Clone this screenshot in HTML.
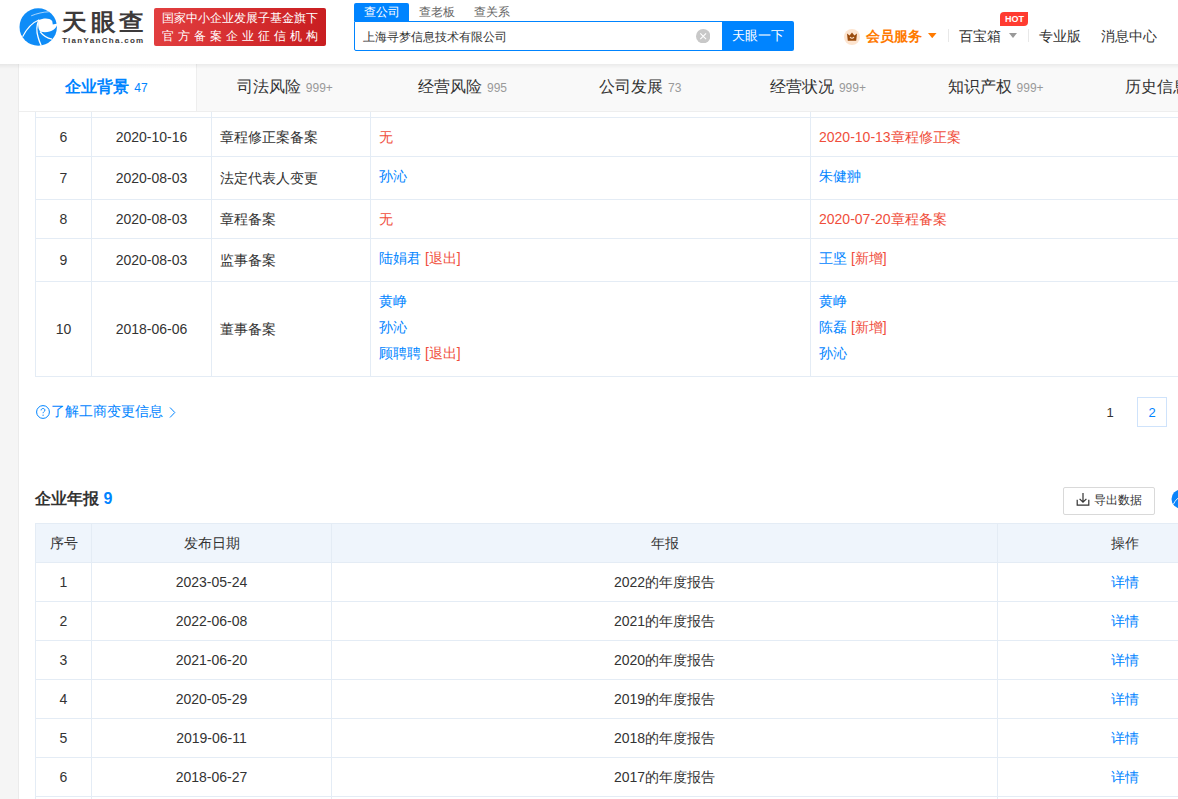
<!DOCTYPE html>
<html><head><meta charset="utf-8">
<style>
*{box-sizing:border-box;margin:0;padding:0}
html,body{width:1178px;height:799px;overflow:hidden;background:#f5f5f5;font-family:"Liberation Sans",sans-serif;color:#333;font-size:14px}
.abs{position:absolute}
#hdr{position:absolute;left:0;top:0;width:1178px;height:64px;background:#fff;z-index:5}
#shadow{position:absolute;left:0;top:64px;width:1178px;height:5px;background:linear-gradient(rgba(0,0,0,0.06),rgba(0,0,0,0));z-index:6}
#panel{position:absolute;left:18px;border-left:1px solid #ebebeb;top:64px;width:1247px;height:800px;background:#fff}
#tabs{position:absolute;left:19px;top:64px;width:1247px;height:48px;background:#f9f9f9;border-bottom:1px solid #eee;display:flex;z-index:4}
.tab{flex:0 0 177.7px;text-align:center;font-size:16px;line-height:46px;color:#333;white-space:nowrap;padding-right:2px}
.tab .n{font-size:12px;color:#999;margin-left:5px}
.tab.on{flex:0 0 178px;background:#fff;color:#0084ff;font-weight:bold;border-right:1px solid #eee;line-height:45px}
.tab.on .n{color:#0084ff;font-weight:normal}
table{border-collapse:collapse;table-layout:fixed;position:absolute}
td,th{border:1px solid #e4ecf5;font-size:14px;font-weight:normal;color:#333;padding:8px 8px;line-height:22px;vertical-align:middle}
.c{text-align:center}
.b{color:#0084ff}
.r{color:#f04e3c}
.lk{line-height:22px;margin-bottom:4px}
th{background:#eff5fc}
</style></head><body>
<div id="hdr">
  <!-- logo -->
  <svg class="abs" style="left:17px;top:6px" width="42" height="42" viewBox="0 0 42 42">
    <circle cx="21.2" cy="21" r="18.7" fill="#0f8cf7"/>
    <path d="M21.6 14.2 C26 12.3 32 11.6 35.2 15 L35.8 18.6 L40.5 17.6 C39.5 23.5 33 27.5 23.7 25.8 C21.2 24 20.6 18 21.6 14.2 Z" fill="#fff"/>
    <path d="M5.6 30.8 C10 22 15.5 16.5 22.3 13.8" stroke="#fff" stroke-width="1.1" fill="none"/>
    <path d="M21.8 14 C19.6 19 19.4 26 21.2 31.5 C22 34.5 23 37 24.3 39.8" stroke="#fff" stroke-width="1.3" fill="none"/>
    <path d="M23 25.6 C26 29.5 30 32 35 33.2" stroke="#fff" stroke-width="1.3" fill="none"/>
    <path d="M14.2 9.8 C20 7.5 26 6 31.8 5.8" stroke="#fff" stroke-width="0.8" fill="none" opacity="0.8"/>
  </svg>
  <div class="abs" style="left:62px;top:8px;font-size:25px;font-weight:bold;color:#3d3a3a;letter-spacing:3.5px;line-height:30px;transform:scaleY(0.93);transform-origin:0 0">天眼查</div>
  <div class="abs" style="left:62px;top:35px;font-size:8px;font-weight:bold;color:#3d3a3a;letter-spacing:1.3px;line-height:11px">TianYanCha.com</div>
  <div class="abs" style="left:154px;top:8px;width:172px;height:38px;background:linear-gradient(100deg,#e23f40,#c81d20);border-radius:2px;color:#fff">
    <div class="abs" style="left:8px;top:3px;font-size:12px;line-height:15px;white-space:nowrap">国家中小企业发展子基金旗下</div>
    <div class="abs" style="left:8px;top:21px;font-size:12px;line-height:15px;white-space:nowrap;letter-spacing:4px">官方备案企业征信机构</div>
  </div>
  <!-- search -->
  <div class="abs" style="left:354px;top:3px;width:55px;height:18px;background:#0084ff;border-radius:2px 2px 0 0;color:#fff;font-size:12px;line-height:18px;text-align:center">查公司</div>
  <div class="abs" style="left:409px;top:3px;width:55px;height:18px;color:#666;font-size:12px;line-height:18px;text-align:center">查老板</div>
  <div class="abs" style="left:464px;top:3px;width:55px;height:18px;color:#666;font-size:12px;line-height:18px;text-align:center">查关系</div>
  <div class="abs" style="left:354px;top:21px;width:369px;height:30px;border:1px solid #0084ff;border-radius:0 0 0 2px;background:#fff">
    <div class="abs" style="left:8px;top:0.5px;font-size:12.2px;line-height:28px;color:#333">上海寻梦信息技术有限公司</div>
    <svg class="abs" style="left:340.7px;top:6.5px" width="14.4" height="14.4" viewBox="0 0 14.4 14.4"><circle cx="7.2" cy="7.2" r="7.2" fill="#c8c8c8"/><path d="M4.3 4.3L10.1 10.1M10.1 4.3L4.3 10.1" stroke="#fff" stroke-width="1.1"/></svg>
  </div>
  <div class="abs" style="left:722px;top:21px;width:72px;height:30px;background:#0084ff;border-radius:0 2px 2px 0;color:#fff;font-size:12.5px;line-height:31px;text-align:center">天眼一下</div>
  <!-- right nav -->
  <svg class="abs" style="left:844px;top:29px" width="16" height="16" viewBox="0 0 16 16"><circle cx="8" cy="8" r="8" fill="#fde4cf"/><path d="M3 4.6 L5.6 6.4 L8 3.6 L10.4 6.4 L13 4.6 L12.2 11.8 H3.8 Z" fill="#9a4b0c"/><path d="M6 8 Q8 10.6 10 8" stroke="#fde4cf" stroke-width="1.1" fill="none"/></svg>
  <div class="abs" style="left:866px;top:26px;font-size:14px;line-height:20px;color:#ff7a00;font-weight:bold">会员服务</div>
  <svg class="abs" style="left:928.3px;top:33px" width="8.5" height="5.2" viewBox="0 0 8.5 5.2"><path d="M0 0H8.5L4.25 5.2Z" fill="#ff7a00"/></svg>
  <div class="abs" style="left:948px;top:29px;width:1px;height:13px;background:#e8e8e8"></div>
  <div class="abs" style="left:959px;top:26px;font-size:14px;line-height:20px;color:#333">百宝箱</div>
  <svg class="abs" style="left:1008.5px;top:33px" width="8" height="5" viewBox="0 0 8 5"><path d="M0 0H8L4 5Z" fill="#999"/></svg>
  <div class="abs" style="left:1000px;top:12px;width:28px;height:13.7px;background:#ff3b30;border-radius:4px 0 4px 0;color:#fff;font-size:9px;line-height:14px;text-align:center;font-weight:bold;padding-left:1px">HOT</div>
  <div class="abs" style="left:1028px;top:29px;width:1px;height:13px;background:#e8e8e8"></div>
  <div class="abs" style="left:1039px;top:26px;font-size:14px;line-height:20px;color:#333">专业版</div>
  <div class="abs" style="left:1101px;top:26px;font-size:14px;line-height:20px;color:#333">消息中心</div>
</div>
<div id="shadow"></div>
<div id="panel"></div>

<!-- change table -->
<table style="left:35px;top:78px;width:1216px">
  <colgroup><col style="width:56px"><col style="width:120px"><col style="width:159px"><col style="width:440px"><col style="width:441px"></colgroup>
  <tr style="height:39px"><td class="c">5</td><td class="c">2020-10-16</td><td>章程备案</td><td class="r">无</td><td class="r">2020-10-13章程</td></tr>
  <tr style="height:39px"><td class="c">6</td><td class="c">2020-10-16</td><td>章程修正案备案</td><td class="r">无</td><td class="r">2020-10-13章程修正案</td></tr>
  <tr><td class="c">7</td><td class="c">2020-08-03</td><td>法定代表人变更</td><td><div class="lk b">孙沁</div></td><td><div class="lk b">朱健翀</div></td></tr>
  <tr style="height:39px"><td class="c">8</td><td class="c">2020-08-03</td><td>章程备案</td><td class="r">无</td><td class="r">2020-07-20章程备案</td></tr>
  <tr><td class="c">9</td><td class="c">2020-08-03</td><td>监事备案</td><td><div class="lk"><span class="b">陆娟君</span> <span class="r">[退出]</span></div></td><td><div class="lk"><span class="b">王坚</span> <span class="r">[新增]</span></div></td></tr>
  <tr><td class="c">10</td><td class="c">2018-06-06</td><td>董事备案</td><td><div class="lk b">黄峥</div><div class="lk b">孙沁</div><div class="lk"><span class="b">顾聘聘</span> <span class="r">[退出]</span></div></td><td><div class="lk b">黄峥</div><div class="lk"><span class="b">陈磊</span> <span class="r">[新增]</span></div><div class="lk b">孙沁</div></td></tr>
</table>

<div id="tabs">
  <div class="tab on">企业背景<span class="n">47</span></div>
  <div class="tab">司法风险<span class="n">999+</span></div>
  <div class="tab">经营风险<span class="n">995</span></div>
  <div class="tab">公司发展<span class="n">73</span></div>
  <div class="tab">经营状况<span class="n">999+</span></div>
  <div class="tab">知识产权<span class="n">999+</span></div>
  <div class="tab">历史信息<span class="n">999+</span></div>
</div>

<!-- link -->
<svg class="abs" style="left:36px;top:405px" width="14" height="14" viewBox="0 0 14 14"><circle cx="7" cy="7" r="6.4" stroke="#0084ff" stroke-width="1" fill="none"/><path d="M5.1 5.4C5.1 4.2 5.9 3.5 7 3.5C8.1 3.5 8.9 4.2 8.9 5.2C8.9 6.5 7.1 6.6 7.1 8.2" stroke="#0084ff" stroke-width="1" fill="none"/><circle cx="7.1" cy="10.2" r="0.65" fill="#0084ff"/></svg>
<div class="abs" style="left:51px;top:401px;font-size:14px;line-height:20px;color:#0084ff;white-space:nowrap">了解工商变更信息</div>
<svg class="abs" style="left:169px;top:406px" width="7" height="13" viewBox="0 0 7 13"><path d="M1 1.5L5.8 6.5L1 11.5" stroke="#0084ff" stroke-width="1" fill="none"/></svg>
<!-- pagination -->
<div class="abs" style="left:1095px;top:398px;width:30px;height:30px;font-size:13px;line-height:30px;text-align:center;color:#333">1</div>
<div class="abs" style="left:1137px;top:397px;width:30px;height:30px;font-size:13px;line-height:28px;text-align:center;color:#0084ff;border:1px solid #cfe3fb;padding-top:1px">2</div>

<!-- annual report -->
<div class="abs" style="left:35px;top:487px;font-size:16px;line-height:24px;font-weight:bold;color:#333;white-space:nowrap">企业年报 <span style="color:#0084ff">9</span></div>
<div class="abs" style="left:1063px;top:487px;width:92px;height:28px;border:1px solid #d9d9d9;border-radius:2px"></div>
<svg class="abs" style="left:1076px;top:492px" width="14" height="14" viewBox="0 0 14 14"><path d="M7 1V10M3.6 6.8L7 10.2L10.4 6.8M1.2 7.8V13.2H12.8V7.8" stroke="#333" stroke-width="1.2" fill="none"/></svg>
<div class="abs" style="left:1094px;top:491px;font-size:12.4px;line-height:18px;color:#333;white-space:nowrap">导出数据</div>
<svg class="abs" style="left:1170.5px;top:489px" width="20" height="20" viewBox="0 0 20 20"><circle cx="10" cy="10" r="9.5" fill="#0a84fa"/><path d="M2.5 15 C4.5 11 7 8.5 11 6.8" stroke="#fff" stroke-width="0.9" fill="none"/></svg>

<table style="left:35px;top:523px;width:1216px">
  <colgroup><col style="width:56px"><col style="width:240px"><col style="width:666px"><col style="width:254px"></colgroup>
  <tr style="height:39px"><th>序号</th><th>发布日期</th><th>年报</th><th>操作</th></tr>
  <tr style="height:39px"><td class="c">1</td><td class="c">2023-05-24</td><td class="c">2022的年度报告</td><td class="c b">详情</td></tr>
  <tr style="height:39px"><td class="c">2</td><td class="c">2022-06-08</td><td class="c">2021的年度报告</td><td class="c b">详情</td></tr>
  <tr style="height:39px"><td class="c">3</td><td class="c">2021-06-20</td><td class="c">2020的年度报告</td><td class="c b">详情</td></tr>
  <tr style="height:39px"><td class="c">4</td><td class="c">2020-05-29</td><td class="c">2019的年度报告</td><td class="c b">详情</td></tr>
  <tr style="height:39px"><td class="c">5</td><td class="c">2019-06-11</td><td class="c">2018的年度报告</td><td class="c b">详情</td></tr>
  <tr style="height:39px"><td class="c">6</td><td class="c">2018-06-27</td><td class="c">2017的年度报告</td><td class="c b">详情</td></tr>
  <tr style="height:39px"><td class="c">7</td><td class="c">2017-06-27</td><td class="c">2016的年度报告</td><td class="c b">详情</td></tr>
</table>
</body></html>
